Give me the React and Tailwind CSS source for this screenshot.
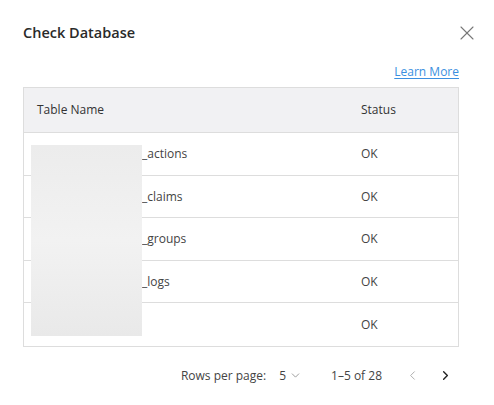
import { X, ChevronDown, ChevronLeft, ChevronRight } from "lucide-react";

const rows = [
  { name: "_actions", status: "OK" },
  { name: "_claims", status: "OK" },
  { name: "_groups", status: "OK" },
  { name: "_logs", status: "OK" },
  { name: "", status: "OK" },
];

const App = () => {
  return (
    <div
      className="w-[494px] h-[405px] bg-white text-[#333] pl-[23px] pr-[35px] pt-[22px]"
      style={{ fontFamily: '"Open Sans", sans-serif' }}
    >
      <div className="flex items-center justify-between h-[22px]">
        <h2 className="text-[14.5px] font-semibold text-[#2a2a2a] leading-[22px]">Check Database</h2>
        <button className="text-[#777] -mr-[20px]">
          <X size={24} strokeWidth={1.1} />
        </button>
      </div>

      <div className="flex justify-end mt-[20px] h-[16px]">
        <a className="text-[12px] leading-[16px] text-[#3b8fe0] underline underline-offset-2">
          Learn More
        </a>
      </div>

      <div className="relative mt-[7px] border border-[#ddd]">
        <div className="flex items-center h-[45px] bg-[#f1f1f3] border-b border-[#ddd] text-[12px]">
          <div className="w-[337px] pl-[13px]">Table Name</div>
          <div>Status</div>
        </div>
        {rows.map((row, i) => (
          <div
            key={i}
            className={`flex items-center h-[42.6px] text-[12px] ${
              i < rows.length - 1 ? "border-b border-[#ddd]" : ""
            }`}
          >
            <div className="w-[337px] pl-[118px] pt-px text-[#444]">{row.name}</div>
            <div className="pt-px text-[#444]">{row.status}</div>
          </div>
        ))}
        {/* blurred redaction over table names */}
        <div className="absolute left-[7px] top-[57px] w-[111px] h-[191px] bg-gradient-to-b from-[#ececec] via-[#f2f2f2] to-[#e9e9e9]" />
      </div>

      <div className="flex items-center justify-end h-[58px] text-[12px] text-[#444]">
        <span>Rows per page:</span>
        <span className="ml-[13px]">5</span>
        <ChevronDown size={13} strokeWidth={1.5} className="ml-[3px] text-[#888]" />
        <span className="ml-[29px]">1–5 of 28</span>
        <ChevronLeft size={15} strokeWidth={1.5} className="ml-[23px] text-[#aaa]" />
        <ChevronRight size={15} strokeWidth={2.2} className="ml-[18px] mr-[6px] text-[#222]" />
      </div>
    </div>
  );
};

export default App;
